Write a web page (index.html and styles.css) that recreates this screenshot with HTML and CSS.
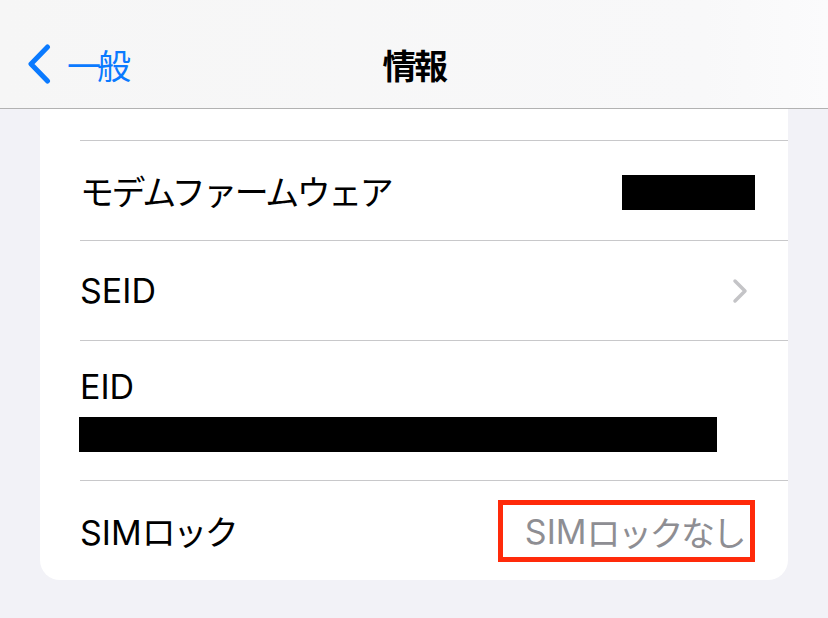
FILE: index.html
```html
<!DOCTYPE html>
<html lang="ja">
<head>
  <meta charset="UTF-8" />
  <meta name="viewport" content="width=device-width, initial-scale=1.0"/>
  <title>情報</title>
  <link rel="stylesheet" href="styles.css">
</head>
<body>
  <header class="navbar">
    <a class="back" href="#">
      <svg class="back-icon" width="26" height="40" viewBox="0 0 26 40">
        <path d="M21.5 3 L5 20 L21.5 37" fill="none" stroke="#0a7aff" stroke-width="5" stroke-linecap="round" stroke-linejoin="round"/>
      </svg>
      <span class="jp back-text">一般</span>
    </a>
    <h1 class="title jp">情報</h1>
    <span></span>
  </header>

  <main class="list">
    <div class="row row-cut"></div>

    <div class="row">
      <span class="label jp">モデムファームウェア</span>
      <span class="redact redact-small"></span>
    </div>

    <div class="row">
      <span class="label">SEID</span>
      <svg class="chevron" width="16" height="26" viewBox="0 0 16 26">
        <path d="M3 3 L13 13 L3 23" fill="none" stroke="#c4c4c7" stroke-width="3.5" stroke-linecap="round" stroke-linejoin="round"/>
      </svg>
    </div>

    <div class="row row-tall">
      <span class="label">EID</span>
      <span class="redact redact-wide"></span>
    </div>

    <div class="row row-last">
      <span class="label">SIM<span class="jp">ロック</span></span>
      <span class="value-box">SIM<span class="jp">ロックなし</span></span>
    </div>
  </main>
</body>
</html>
```

FILE: styles.css
```css
body {
  margin: 0;
  background: #f2f2f7;
  font-family: Inter, "Noto Sans CJK JP", sans-serif;
  color: #000;
}

.jp {
  letter-spacing: -2.5px;
}

.navbar {
  height: 88px;
  padding-top: 20px;
  border-bottom: 1px solid #b2b2b2;
  background: linear-gradient(to right, #f6f6f6, #f8f8f9 85%, #fbfbfc);
  display: grid;
  grid-template-columns: 1fr auto 1fr;
  align-items: center;
}

.back {
  display: flex;
  align-items: center;
  gap: 15px;
  padding-left: 26px;
  color: #0a7aff;
  text-decoration: none;
  font-size: 34px;
}

.back-text {
  letter-spacing: -4px;
}

.title {
  margin: 0;
  font-size: 34px;
  font-weight: 700;
}

.list {
  margin: 0 40px;
  background: #fff;
  border-radius: 0 0 20px 20px;
}

.row {
  margin-left: 40px;
  padding-right: 33px;
  height: 99px;
  border-bottom: 1px solid #c8c8ca;
  display: flex;
  align-items: center;
  justify-content: space-between;
  font-size: 34px;
}

.row-cut {
  height: 31px;
}

.row-tall {
  height: 140px;
  flex-direction: column;
  align-items: flex-start;
  justify-content: flex-start;
  padding-top: 25px;
  box-sizing: border-box;
}

.row-last {
  border-bottom: none;
}

.label {
  white-space: nowrap;
}

.redact {
  display: block;
  background: #000;
}

.redact-small {
  width: 133px;
  height: 35px;
  margin-top: 4px;
}

.redact-wide {
  width: 638px;
  height: 35px;
  margin-top: 10px;
  margin-left: -1px;
}

.chevron {
  margin-right: 7px;
}

.value-box {
  border: 5px solid #ff2a0a;
  height: 50px;
  display: flex;
  align-items: center;
  padding: 2px 6px 0 22px;
  color: #8e8e93;
  white-space: nowrap;
}
```
